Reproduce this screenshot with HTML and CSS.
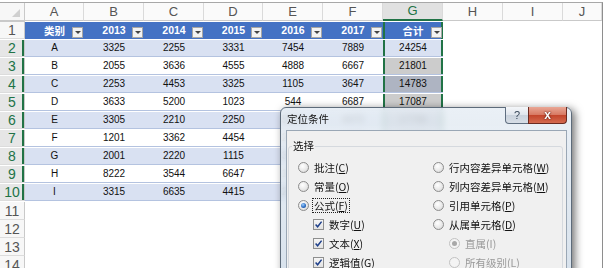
FILE: index.html
```html
<!DOCTYPE html>
<html lang="zh-CN">
<head>
<meta charset="utf-8">
<title>定位条件</title>
<link rel="stylesheet" href="styles.css">
</head>
<body>
<div class="sheet">
  <div class="row colhdr">
    <div class="corner"><span class="tri"></span></div>
    <div class="ch">A</div><div class="ch">B</div><div class="ch">C</div><div class="ch">D</div><div class="ch">E</div><div class="ch">F</div><div class="ch chsel">G</div><div class="ch">H</div><div class="ch">I</div><div class="ch">J</div><div class="ch last"></div>
  </div>
  <div class="row">
    <div class="rh">1</div>
    <div class="th">类别<span class="dd"></span></div>
    <div class="th">2013<span class="dd"></span></div>
    <div class="th">2014<span class="dd"></span></div>
    <div class="th">2015<span class="dd"></span></div>
    <div class="th">2016<span class="dd"></span></div>
    <div class="th">2017<span class="dd"></span></div>
    <div class="th gs">合计<span class="dd"></span></div>
    <div class="c"></div><div class="c"></div><div class="c"></div><div class="c"></div>
  </div>
  <div class="row band">
    <div class="rh rsel">2</div>
    <div class="td">A</div><div class="td">3325</div><div class="td">2255</div><div class="td">3331</div><div class="td">7454</div><div class="td">7889</div><div class="td gs">24254</div>
    <div class="c"></div><div class="c"></div><div class="c"></div><div class="c"></div>
  </div>
  <div class="row plain">
    <div class="rh rsel">3</div>
    <div class="td">B</div><div class="td">2055</div><div class="td">3636</div><div class="td">4555</div><div class="td">4888</div><div class="td">6667</div><div class="td gs shade">21801</div>
    <div class="c"></div><div class="c"></div><div class="c"></div><div class="c"></div>
  </div>
  <div class="row band">
    <div class="rh rsel">4</div>
    <div class="td">C</div><div class="td">2253</div><div class="td">4453</div><div class="td">3325</div><div class="td">1105</div><div class="td">3647</div><div class="td gs shade">14783</div>
    <div class="c"></div><div class="c"></div><div class="c"></div><div class="c"></div>
  </div>
  <div class="row plain">
    <div class="rh rsel">5</div>
    <div class="td">D</div><div class="td">3633</div><div class="td">5200</div><div class="td">1023</div><div class="td">544</div><div class="td">6687</div><div class="td gs shade">17087</div>
    <div class="c"></div><div class="c"></div><div class="c"></div><div class="c"></div>
  </div>
  <div class="row band">
    <div class="rh rsel">6</div>
    <div class="td">E</div><div class="td">3305</div><div class="td">2210</div><div class="td">2250</div><div class="td">5561</div><div class="td">4470</div><div class="td gs shade">17796</div>
    <div class="c"></div><div class="c"></div><div class="c"></div><div class="c"></div>
  </div>
  <div class="row plain">
    <div class="rh rsel">7</div>
    <div class="td">F</div><div class="td">1201</div><div class="td">3362</div><div class="td">4454</div><div class="td">2231</div><div class="td">5008</div><div class="td gs shade">16256</div>
    <div class="c"></div><div class="c"></div><div class="c"></div><div class="c"></div>
  </div>
  <div class="row band">
    <div class="rh rsel">8</div>
    <div class="td">G</div><div class="td">2001</div><div class="td">2220</div><div class="td">1115</div><div class="td">3320</div><div class="td">4125</div><div class="td gs shade">12781</div>
    <div class="c"></div><div class="c"></div><div class="c"></div><div class="c"></div>
  </div>
  <div class="row plain">
    <div class="rh rsel">9</div>
    <div class="td">H</div><div class="td">8222</div><div class="td">3544</div><div class="td">6647</div><div class="td">1024</div><div class="td">2213</div><div class="td gs shade">21650</div>
    <div class="c"></div><div class="c"></div><div class="c"></div><div class="c"></div>
  </div>
  <div class="row band">
    <div class="rh rsel">10</div>
    <div class="td">I</div><div class="td">3315</div><div class="td">6635</div><div class="td">4415</div><div class="td">2547</div><div class="td">3369</div><div class="td gs shade gend">20281</div>
    <div class="c"></div><div class="c"></div><div class="c"></div><div class="c"></div>
  </div>
  <div class="row empty"><div class="rh">11</div></div>
  <div class="row empty"><div class="rh">12</div></div>
  <div class="row empty"><div class="rh">13</div></div>
  <div class="row empty"><div class="rh">14</div></div>

  <div class="dialog">
    <div class="titlebar">
      <span class="title">定位条件</span>
      <span class="btn help">?</span>
      <span class="btn close">x</span>
    </div>
    <div class="client">
      <div class="group">
        <span class="legend">选择</span>
        <div class="cols">
          <div class="col">
            <div class="item"><span class="radio"></span><span class="lbl">批注(<u>C</u>)</span></div>
            <div class="item"><span class="radio"></span><span class="lbl">常量(<u>O</u>)</span></div>
            <div class="item"><span class="radio on"></span><span class="lbl focus">公式(<u>F</u>)</span></div>
            <div class="item ind"><span class="check"><svg viewBox="0 0 9 9" width="9" height="9"><path d="M1.6 4.6 L3.6 6.8 L7.6 1.6" fill="none" stroke="#1d3f8a" stroke-width="1.5"/></svg></span><span class="lbl">数字(<u>U</u>)</span></div>
            <div class="item ind"><span class="check"><svg viewBox="0 0 9 9" width="9" height="9"><path d="M1.6 4.6 L3.6 6.8 L7.6 1.6" fill="none" stroke="#1d3f8a" stroke-width="1.5"/></svg></span><span class="lbl">文本(<u>X</u>)</span></div>
            <div class="item ind"><span class="check"><svg viewBox="0 0 9 9" width="9" height="9"><path d="M1.6 4.6 L3.6 6.8 L7.6 1.6" fill="none" stroke="#1d3f8a" stroke-width="1.5"/></svg></span><span class="lbl">逻辑值(<u>G</u>)</span></div>
          </div>
          <div class="col">
            <div class="item"><span class="radio"></span><span class="lbl">行内容差异单元格(<u>W</u>)</span></div>
            <div class="item"><span class="radio"></span><span class="lbl">列内容差异单元格(<u>M</u>)</span></div>
            <div class="item"><span class="radio"></span><span class="lbl">引用单元格(<u>P</u>)</span></div>
            <div class="item"><span class="radio"></span><span class="lbl">从属单元格(<u>D</u>)</span></div>
            <div class="item ind2 dis"><span class="radio on"></span><span class="lbl">直属(I)</span></div>
            <div class="item ind2 dis"><span class="radio"></span><span class="lbl">所有级别(L)</span></div>
          </div>
        </div>
      </div>
    </div>
  </div>
</div>
</body>
</html>
```

FILE: styles.css
```css
* { box-sizing: border-box; }
html, body { margin: 0; padding: 0; background: #fff; }
body {
  font-family: "Liberation Sans", "Noto Sans CJK SC", sans-serif;
  width: 605px; height: 268px; overflow: hidden;
}
.sheet {
  position: relative;
  margin-top: 2px;
  width: 603px;
  height: 266px;
  border-top: 1px solid #a8a8a8;
  border-right: 1px solid #8e8e8e;
  overflow: hidden;
}
.row {
  display: grid;
  grid-template-columns: 25px 59px 60px 60px 59px 60px 60px 60px 60px 60px 1fr;
  height: 18px;
}
.colhdr { height: 19px; }
.corner {
  background: #f7f7f7;
  border-right: 1px solid #c9c9c9;
  border-bottom: 1px solid #c9c9c9;
  position: relative;
}
.tri {
  position: absolute; right: 4px; bottom: 3px;
  width: 0; height: 0;
  border-left: 8px solid transparent;
  border-bottom: 8px solid #d0d0d0;
}
.ch {
  background: #fafafa;
  border-right: 1px solid #dadada;
  border-bottom: 1px solid #c9c9c9;
  color: #555;
  font-size: 13px;
  display: flex; align-items: center; justify-content: center;
}
.ch.last { border-right: 0; }
.chsel {
  background: #e1e1e1;
  color: #217346;
  border-bottom: 2px solid #217346;
}
.rh {
  background: #f7f7f7;
  border-right: 1px solid #c9c9c9;
  border-bottom: 1px solid #dcdcdc;
  color: #555;
  font-size: 14px;
  display: flex; align-items: center; justify-content: center;
  line-height: 1;
}
.rsel {
  background: #e6e6e6;
  color: #217346;
  box-shadow: inset -2px 0 #217346;
}
.th {
  position: relative;
  background: #4472c4;
  color: #fff;
  font-weight: bold;
  font-size: 10.5px;
  display: flex; align-items: center; justify-content: center;
}
.dd {
  position: absolute; right: 1px; top: 5px;
  width: 11px; height: 11px;
  background: #f2f2f2;
  border: 1px solid #a6a6a6;
}
.dd::after {
  content: ""; position: absolute; left: 2px; top: 3px;
  border-left: 3px solid transparent;
  border-right: 3px solid transparent;
  border-top: 3px solid #444;
}
.td {
  font-size: 10px;
  color: #111;
  display: flex; align-items: center; justify-content: center;
  border-bottom: 1px solid #b4c3e0;
}
.band .td { background: #d9e1f2; }
.plain .td { background: #fff; }
.td.shade { background-image: linear-gradient(rgba(0,0,0,.2), rgba(0,0,0,.2)); }
.gs { box-shadow: inset 2px 0 #217346, inset -2px 0 #217346; }
.gend { box-shadow: inset 2px 0 #217346, inset -2px 0 #217346, inset 0 -2px #217346; }
.c { background: #fff; }

/* dialog */
.dialog {
  position: absolute;
  left: 280px; top: 104px;
  width: 292px; height: 180px;
  border: 1px solid #5d6b7a;
  border-radius: 6px 6px 0 0;
  background: linear-gradient(180deg, rgba(230,237,244,.84), rgba(206,219,232,.82));
  backdrop-filter: blur(3px);
  box-shadow: 3px 2px 8px rgba(0,0,0,.55);
  font-family: "Noto Sans CJK SC", "Liberation Sans", sans-serif;
}
.titlebar {
  position: relative;
  height: 22px;
}
.title {
  position: absolute; left: 6px; top: 4px;
  font-size: 10.5px; color: #111;
  line-height: 14px;
}
.btn {
  position: absolute; top: -1px; height: 17px;
  border: 1px solid #5f6e80;
  border-top: 0;
  display: flex; align-items: center; justify-content: center;
  font-family: "Liberation Sans", sans-serif;
  font-weight: bold;
}
.help {
  left: 224px; width: 24px;
  border-radius: 0 0 0 4px;
  background: linear-gradient(180deg, #f4f6f9 0%, #dfe5ec 50%, #c9d2dc 51%, #d7dee6 100%);
  color: #3a4a5c; font-size: 11px; font-weight: normal;
}
.close {
  left: 247px; width: 39px;
  border-radius: 0 0 4px 0;
  border-color: #6a2a20;
  background: linear-gradient(180deg, #e9a796 0%, #d87a64 48%, #c3452c 52%, #d46a4f 100%);
  color: #fff; font-size: 12px;
  text-shadow: 0 0 2px #5a1a10, 0 0 1px #5a1a10;
}
.client {
  margin-left: 5px;
  width: 281px;
  height: 160px;
  background: #f0f0f0;
  border: 1px solid #9aa7b5;
  padding: 15px 3px 0 1px;
}
.group {
  position: relative;
  border: 1px solid #d5d9de;
  border-radius: 3px;
  height: 140px;
  padding: 11px 0 0 9px;
}
.legend {
  position: absolute; left: 3px; top: -8px;
  background: #f0f0f0;
  padding: 0 1px;
  font-size: 10.5px; line-height: 14px; color: #111;
}
.cols { display: flex; }
.col { display: flex; flex-direction: column; }
.col:first-child { width: 135px; }
.item {
  height: 19px;
  display: flex; align-items: center;
  font-size: 10.5px; color: #111;
  white-space: nowrap;
}
.item.ind { padding-left: 15px; }
.item.ind2 { padding-left: 16px; }
.item.dis { color: #9a9a9a; }
.lbl { margin-left: 4px; line-height: 13px; padding: 0 1px; }
.lbl u { text-decoration-thickness: 1px; text-underline-offset: 1px; }
.focus { outline: 1px dotted #222; outline-offset: 0; }
.radio {
  position: relative;
  width: 11px; height: 11px; flex: none;
  border-radius: 50%;
  border: 1px solid #8c8c8c;
  background: radial-gradient(circle at 40% 35%, #ffffff 0%, #e9e9e9 55%, #cfcfcf 100%);
}
.dis .radio { border-color: #c2c2c2; background: #f4f4f4; }
.radio.on::after {
  content: ""; position: absolute; left: 2px; top: 2px;
  width: 5px; height: 5px; border-radius: 50%;
  background: radial-gradient(circle at 40% 35%, #9fd0ff 0%, #2f6fc4 55%, #103e80 100%);
}
.dis .radio.on::after { background: #a8a8a8; }
.check {
  width: 11px; height: 11px; flex: none;
  border: 1px solid #8e8f8f;
  background: linear-gradient(180deg, #f6f6f6, #e2e2e2);
  display: flex; align-items: center; justify-content: center;
}
.check svg { display: block; }
```
